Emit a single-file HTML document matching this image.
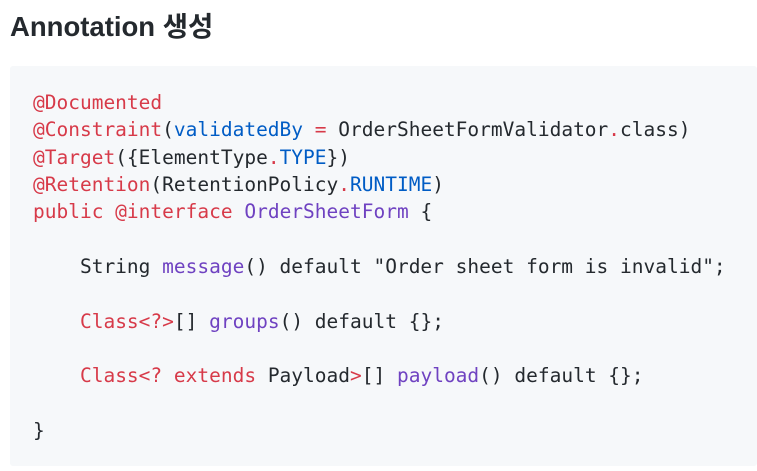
<!DOCTYPE html>
<html><head><meta charset="utf-8"><style>
html,body{margin:0;padding:0;background:#fff;width:757px;height:471px;overflow:hidden}
h2{position:absolute;left:10px;top:9px;margin:0;font:bold 27.5px/36px "Liberation Sans","Noto Sans CJK KR",sans-serif;color:#24292e}
.box{position:absolute;left:10px;top:66px;width:747px;height:400px;background:#f6f8fa;border-radius:3px}
pre{position:absolute;left:23px;top:23px;margin:0;font:19.5px/27.33px "DejaVu Sans Mono",monospace;color:#24292e}
.r{color:#d73a49}.b{color:#005cc5}.p{color:#6f42c1}
</style></head><body>
<h2>Annotation 생성</h2>
<div class="box"><pre><span class="r">@Documented</span>
<span class="r">@Constraint</span>(<span class="b">validatedBy</span> <span class="r">=</span> OrderSheetFormValidator<span class="r">.</span>class)
<span class="r">@Target</span>({ElementType<span class="r">.</span><span class="b">TYPE</span>})
<span class="r">@Retention</span>(RetentionPolicy<span class="r">.</span><span class="b">RUNTIME</span>)
<span class="r">public @interface</span> <span class="p">OrderSheetForm</span> {

    String <span class="p">message</span>() default "Order sheet form is invalid";

    <span class="r">Class&lt;?&gt;</span>[] <span class="p">groups</span>() default {};

    <span class="r">Class&lt;? extends</span> Payload<span class="r">&gt;</span>[] <span class="p">payload</span>() default {};

}</pre></div>
</body></html>
